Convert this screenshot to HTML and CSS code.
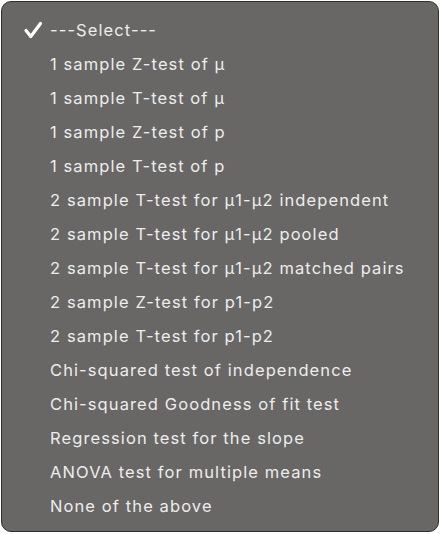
FILE: index.html
```html
<!DOCTYPE html>
<html>
<head>
<meta charset="utf-8">
<link rel="stylesheet" href="styles.css">
</head>
<body>
<div class="menu">
  <div class="item selected">
    <svg class="check" viewBox="0 0 20 18" width="20" height="18"><path d="M3 9.5 L7.8 15.5 L17.5 2.5" fill="none" stroke="#fff" stroke-width="3.2" stroke-linecap="round" stroke-linejoin="round"/></svg>
    <span>---Select---</span>
  </div>
  <div class="item"><span>1 sample Z-test of μ</span></div>
  <div class="item"><span>1 sample T-test of μ</span></div>
  <div class="item"><span>1 sample Z-test of p</span></div>
  <div class="item"><span>1 sample T-test of p</span></div>
  <div class="item"><span>2 sample T-test for μ1-μ2 independent</span></div>
  <div class="item"><span>2 sample T-test for μ1-μ2 pooled</span></div>
  <div class="item"><span>2 sample T-test for μ1-μ2 matched pairs</span></div>
  <div class="item"><span>2 sample Z-test for p1-p2</span></div>
  <div class="item"><span>2 sample T-test for p1-p2</span></div>
  <div class="item"><span>Chi-squared test of independence</span></div>
  <div class="item"><span>Chi-squared Goodness of fit test</span></div>
  <div class="item"><span>Regression test for the slope</span></div>
  <div class="item"><span>ANOVA test for multiple means</span></div>
  <div class="item"><span>None of the above</span></div>
</div>
</body>
</html>
```
FILE: styles.css
```css
html, body {
  margin: 0;
  padding: 0;
  background: #ffffff;
}
body {
  width: 440px;
  height: 534px;
  overflow: hidden;
}
.menu {
  box-sizing: border-box;
  margin: 1px 0 0 1px;
  width: 438px;
  height: 531px;
  border: 1px solid #2e2e2e;
  border-radius: 10px;
  background: #686765;
  padding-top: 11px;
  font-family: Inter, "Noto Sans", sans-serif;
  font-size: 16.5px;
  font-weight: 420;
  color: #ededed;
}
.item {
  height: 34px;
  display: flex;
  align-items: center;
  padding-left: 48px;
  position: relative;
  letter-spacing: 1.1px;
}
.check {
  position: absolute;
  left: 21px;
  top: 8px;
}
```
